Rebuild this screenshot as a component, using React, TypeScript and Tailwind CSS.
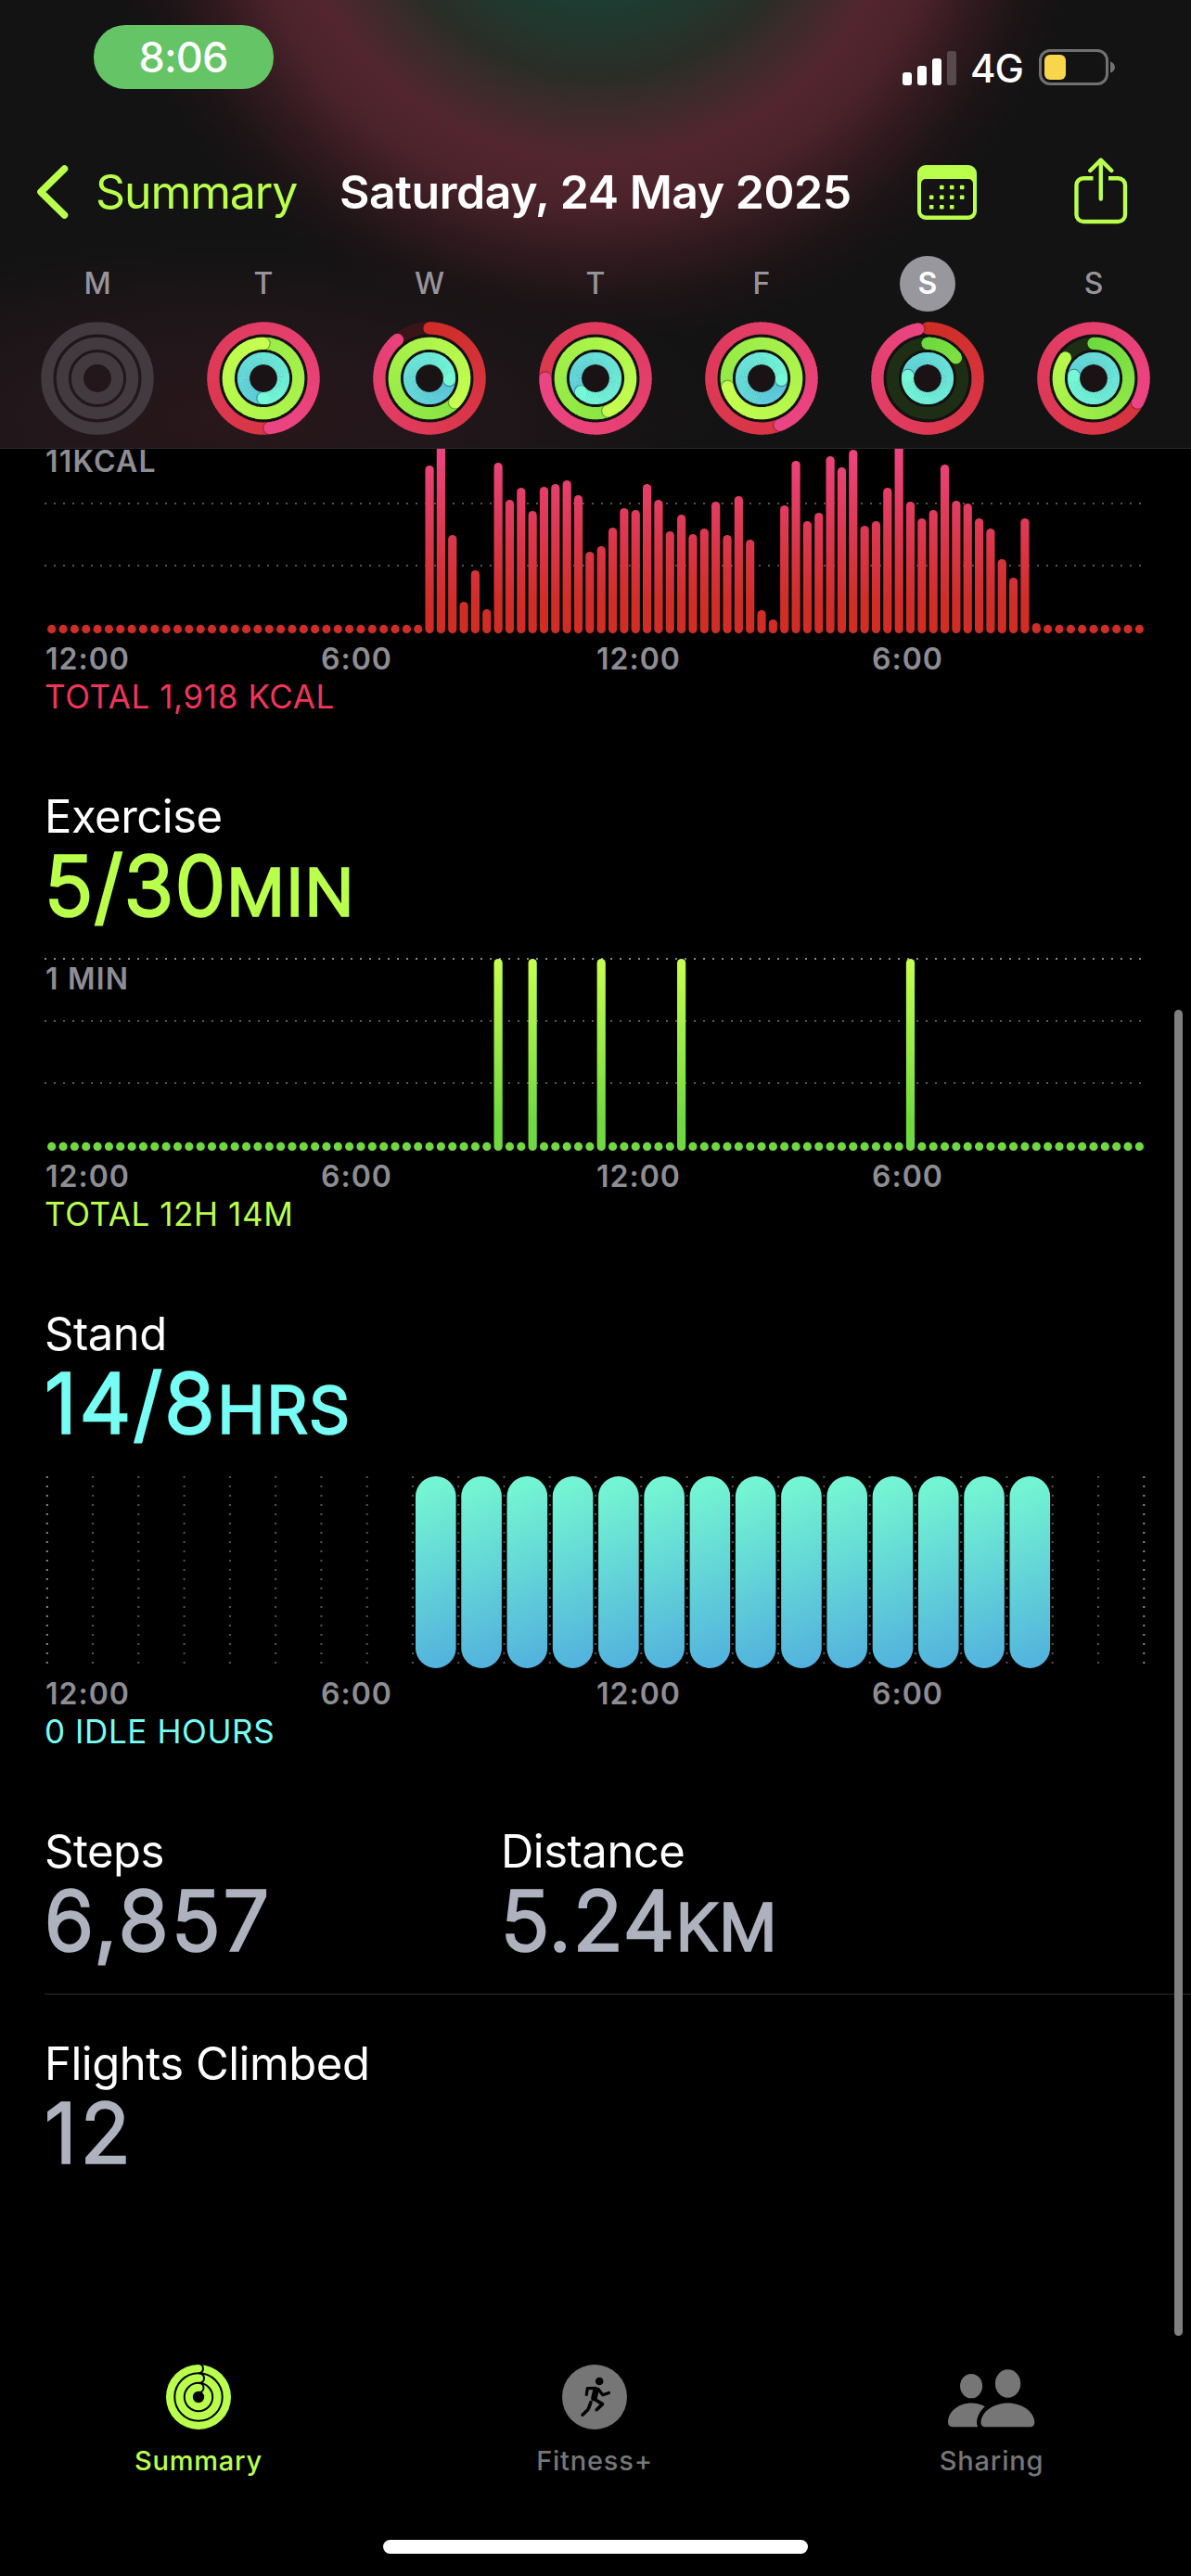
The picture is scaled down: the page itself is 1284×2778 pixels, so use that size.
import React from "react";

type RingProps = {
  radius: number;
  progress: number;
  from: number[];
  to: number[];
  track: string;
};

const days = [
  { label: "M", rings: null },
  { label: "T", rings: [1.48, 2, 1.5] },
  { label: "W", rings: [0.89, 1.37, 1.26] },
  { label: "T", rings: [1.75, 1.44, 1.63] },
  { label: "F", rings: [1.44, 1.71, 1.26] },
  { label: "S", rings: [0.97, 0.15, 1.77], selected: true },
  { label: "S", rings: [1.33, 0.85, 1.77] },
];

// bar heights in px, one bar per 15 minutes
const moveBars: Record<number, number> = {
  33: 181, 34: 204, 35: 106, 36: 34, 37: 68, 38: 26, 39: 184, 40: 144,
  41: 157, 42: 132, 43: 158, 44: 161, 45: 165, 46: 149, 47: 88, 48: 94,
  49: 114, 50: 135, 51: 133, 52: 161, 53: 144, 54: 110, 55: 128, 56: 107,
  57: 113, 58: 142, 59: 106, 60: 148, 61: 101, 62: 25, 63: 15, 64: 138,
  65: 186, 66: 121, 67: 130, 68: 191, 69: 179, 70: 198, 71: 116, 72: 121,
  73: 157, 74: 206, 75: 142, 76: 124, 77: 133, 78: 182, 79: 143, 80: 140,
  81: 124, 82: 113, 83: 80, 84: 60, 85: 124, 86: 11,
};

const exerciseBars: Record<number, number> = {
  39: 207, 42: 207, 48: 207, 55: 207, 75: 207,
};

const polar = (radius: number, turn: number) => {
  const a = turn * Math.PI * 2;
  return [61 + radius * Math.sin(a), 61 - radius * Math.cos(a)];
};

const mix = (from: number[], to: number[], t: number) =>
  `rgb(${from.map((c, i) => Math.round(c + (to[i] - c) * t)).join(",")})`;

const Ring = ({ radius, progress, from, to, track }: RingProps) => {
  const start = Math.max(0, progress - 1);
  const total = Math.max(1, progress);
  const steps = 72;
  const size = (progress - start) / steps;
  const [hx, hy] = polar(radius, progress);
  const [sx, sy] = polar(radius, progress + 0.9 / radius / 6.28);
  const [bx, by] = polar(radius, start);

  return (
    <g fill="none" strokeWidth="13.2">
      <circle cx="61" cy="61" r={radius} stroke={track} />
      {progress < 1 && (
        <circle cx={bx} cy={by} r="6.6" fill={mix(from, to, 0)} />
      )}
      {Array.from({ length: steps }, (_, i) => {
        const a = start + i * size;
        const [x1, y1] = polar(radius, a);
        const [x2, y2] = polar(radius, a + size + (i < steps - 1 ? 0.003 : 0));
        return (
          <path
            key={i}
            d={`M${x1} ${y1}A${radius} ${radius} 0 0 1 ${x2} ${y2}`}
            stroke={mix(from, to, a / total)}
          />
        );
      })}
      {progress > 0.95 && (
        <circle cx={sx} cy={sy} r="6.9" fill="#000" fillOpacity="0.3" />
      )}
      <circle cx={hx} cy={hy} r="6.6" fill={mix(from, to, progress / total)} />
    </g>
  );
};

const DayRings = ({ rings }: { rings: number[] | null }) => (
  <svg viewBox="0 0 122 122" className="w-[122px] h-[122px]">
    {rings ? (
      <>
        <circle cx="61" cy="61" r="60" fill="#131112" />
        <circle cx="61" cy="61" r="15" fill="#1a1315" />
        <Ring radius={54.1} progress={rings[0]} from={[207, 45, 38]} to={[236, 69, 133]} track="#3a1518" />
        <Ring radius={37.7} progress={rings[1]} from={[111, 218, 64]} to={[198, 255, 79]} track="#1e2e14" />
        <Ring radius={21.5} progress={rings[2]} from={[84, 183, 220]} to={[117, 248, 214]} track="#142a2e" />
      </>
    ) : (
      <g fill="none" stroke="#423a3e" strokeWidth="13.2">
        <circle cx="61" cy="61" r="54.1" />
        <circle cx="61" cy="61" r="37.7" />
        <circle cx="61" cy="61" r="21.5" />
      </g>
    )}
  </svg>
);

const StatusBar = () => (
  <div className="flex h-[123px] justify-between pl-[101px] pr-[82px]">
    <div className="mt-[27px] flex h-[69px] w-[194px] items-center justify-center rounded-[34px] bg-[#65c466] pr-px text-[45px] font-medium tracking-[-0.9px] text-white">
      8:06
    </div>
    <div className="mt-[53px] flex h-[39px] items-center">
      <svg viewBox="0 0 58 38" className="h-[38px] w-[58px]" fill="#fff">
        <rect x="0" y="24" width="10" height="14" rx="3" />
        <rect x="16" y="17" width="10" height="21" rx="3" />
        <rect x="32" y="9" width="10" height="29" rx="3" />
        <rect x="48" y="1" width="10" height="37" rx="3" fill="#564a4d" />
      </svg>
      <span className="ml-[15px] w-[60px] pt-[3px] text-[42px] leading-none font-medium tracking-[-1px] whitespace-nowrap text-white">
        4G
      </span>
      <svg viewBox="0 0 82 39" className="ml-[14px] h-[39px] w-[82px]">
        <rect x="1.5" y="1.5" width="72" height="36" rx="10.5" fill="none" stroke="#717171" strokeWidth="3" />
        <rect x="6" y="6" width="23" height="27" rx="6" fill="#f7d64b" />
        <path d="M77 13.5c3 .8 5 3 5 6s-2 5.2-5 6z" fill="#717171" />
      </svg>
    </div>
  </div>
);

const CalendarIcon = () => {
  const cols = [15.2, 26.3, 37.2, 48.2];
  const rows = [24, 34.7, 45.3];
  return (
    <svg viewBox="0 0 64 59" className="h-[59px] w-[64px]" fill="#b9ff4b">
      <path
        fillRule="evenodd"
        d="M9 0h46a9 9 0 0 1 9 9v41a9 9 0 0 1-9 9H9a9 9 0 0 1-9-9V9a9 9 0 0 1 9-9zM9 15a5 5 0 0 0-5 5v29.500a5 5 0 0 0 5 5h46a5 5 0 0 0 5-5V20a5 5 0 0 0-5-5z"
      />
      {rows.map((y, r) =>
        cols.map((x, c) =>
          (r === 0 && c === 0) || (r === 2 && c === 3) ? null : (
            <rect key={`${r}${c}`} x={x - 2.3} y={y - 2.3} width="4.6" height="4.6" rx="1" />
          )
        )
      )}
    </svg>
  );
};

const ShareIcon = () => (
  <svg
    viewBox="0 0 58 72"
    className="h-[72px] w-[58px]"
    fill="none"
    stroke="#b9ff4b"
    strokeWidth="4.4"
    strokeLinecap="round"
    strokeLinejoin="round"
  >
    <path
      d="M20.500 22.200H10a7.500 7.500 0 0 0-7.500 7.500V61.500a7.500 7.500 0 0 0 7.500 7.500h37.500a7.500 7.500 0 0 0 7.500-7.500V29.700a7.500 7.500 0 0 0-7.500-7.500H37"
      strokeLinecap="butt"
    />
    <path d="M28.800 3v41.500M17.300 14 28.800 2.500 40.300 14" />
  </svg>
);

const Header = () => (
  <header className="h-[484px] shrink-0 border-b border-[#2a2a2b] bg-[#131313] bg-[radial-gradient(circle_at_642px_-163px,#1d4034_150px,#1f3a30_180px,#2a2d27_245px,#3d2b2a_285px,#53262f_335px,#4b222b_385px,#301a1f_440px,#1c1416_490px,transparent_535px),radial-gradient(ellipse_520px_190px_at_250px_450px,#29171b_0%,#20161a_50%,transparent_100%)]">
    <StatusBar />
    <div className="flex h-[168px] items-center pl-10">
      <svg
        viewBox="0 0 34 58"
        className="h-[58px] w-[34px]"
        fill="none"
        stroke="#b9ff4b"
        strokeWidth="7.5"
        strokeLinecap="round"
        strokeLinejoin="round"
      >
        <path d="M29.500 4 4 29l25.500 25" />
      </svg>
      <span className="ml-[29px] w-[215px] text-[50px] tracking-[-1.1px] whitespace-nowrap text-[#b9ff4b]">
        Summary
      </span>
      <h1 className="ml-[48px] w-[550px] text-[50px] font-semibold tracking-[-0.45px] whitespace-nowrap text-white">
        Saturday, 24 May 2025
      </h1>
      <div className="ml-[73px]">
        <CalendarIcon />
      </div>
      <div className="-mt-[3px] ml-[105px]">
        <ShareIcon />
      </div>
    </div>
    <div className="-mt-[15px] flex justify-between px-[44px]">
      {days.map((day, i) => (
        <div key={i} className="flex w-[122px] flex-col items-center">
          <div
            className={
              day.selected
                ? "flex size-[60px] items-center justify-center rounded-full bg-[#98979d] text-[32px] font-semibold text-white"
                : "flex size-[60px] items-center justify-center text-[32px] font-medium text-[#98949b]"
            }
          >
            {day.label}
          </div>
          <div className="mt-[11px]">
            <DayRings rings={day.rings} />
          </div>
        </div>
      ))}
    </div>
  </header>
);

const GridLine = ({ y, color }: { y: number; color: string }) => (
  <line x1="0" x2="1183" y1={y} y2={y} stroke={color} strokeWidth="2" strokeDasharray="2 8" />
);

type BarChartProps = {
  id: string;
  bars: Record<number, number>;
  top: string;
  bottom: string;
  label: string;
};

const BarChart = ({ id, bars, top, bottom, label }: BarChartProps) => (
  <div className="relative h-[212px]">
    <svg viewBox="0 0 1190 212" className="h-[212px] w-[1190px]">
      <defs>
        <linearGradient id={id} gradientUnits="userSpaceOnUse" x1="0" y1="2" x2="0" y2="209">
          <stop offset="0" stopColor={top} />
          <stop offset="0.85" stopColor={bottom} />
        </linearGradient>
      </defs>
      <GridLine y={2} color="#8a8a8a" />
      <GridLine y={69} color="#545454" />
      <GridLine y={136} color="#545454" />
      {Array.from({ length: 96 }, (_, i) => {
        const h = bars[i] ?? 9.2;
        return (
          <rect key={i} x={3.1 + i * 12.344} y={209 - h} width="9.2" height={h} rx="4.6" fill={`url(#${id})`} />
        );
      })}
    </svg>
    <span className="absolute top-[4px] left-px text-[32px] leading-[40px] font-semibold tracking-[1.2px] text-[#8e8d93]">
      {label}
    </span>
  </div>
);

const StandChart = () => (
  <svg viewBox="0 0 1190 212" className="block h-[212px] w-[1190px]">
    <defs>
      <linearGradient id="stand" x1="0.45" y1="0" x2="0.55" y2="1">
        <stop offset="0.05" stopColor="#73f4d2" />
        <stop offset="1" stopColor="#52b2dd" />
      </linearGradient>
    </defs>
    {Array.from({ length: 25 }, (_, i) => (
      <line
        key={i}
        x1={2.8 + i * 49.27}
        x2={2.8 + i * 49.27}
        y1="2"
        y2="206"
        stroke={i % 24 === 0 ? "#8a8a8a" : "#545454"}
        strokeWidth="2"
        strokeDasharray="2 8"
      />
    ))}
    {Array.from({ length: 14 }, (_, i) => (
      <rect key={i} x={400 + i * 49.27} y="2" width="43.6" height="207" rx="21.8" fill="url(#stand)" />
    ))}
  </svg>
);

const Axis = () => (
  <div className="mt-[5px] -mb-px flex pl-px text-[32px] leading-[40px] font-semibold tracking-[1px] text-[#8e8d93]">
    {["12:00", "6:00", "12:00", "6:00"].map((t, i) => (
      <span key={i} className="w-[297px]">
        {t}
      </span>
    ))}
  </div>
);

const Total = ({ text, color }: { text: string; color: string }) => (
  <p className={`mt-px text-[35px] leading-[40px] tracking-[0.6px] ${color}`}>{text}</p>
);

type MetricProps = {
  title: string;
  value: string;
  unit?: string;
  color: string;
  spacing?: string;
};

const Metric = ({ title, value, unit, color, spacing = "tracking-[1.5px]" }: MetricProps) => (
  <div>
    <h2 className="text-[49px] leading-[60px] tracking-[-0.5px] text-white">{title}</h2>
    <p
      className={`mt-[3px] h-[80px] pt-px text-[88px] leading-[80px] font-light whitespace-nowrap [-webkit-text-stroke:3.5px_currentColor] [stroke-linejoin:round] ${spacing} ${color}`}
    >
      {value}
      {unit && <span className="text-[69px] leading-none tracking-[2px]">{unit}</span>}
    </p>
  </div>
);

const TabBar = () => (
  <nav className="flex h-[258px] shrink-0 flex-col items-center justify-between pb-[24px]">
    <div className="flex w-full text-center text-[29px] leading-[36px] font-medium tracking-[0.8px] text-[#767676]">
      <div className="flex w-[428px] flex-col items-center pt-[30px] text-[#b9ff4b]">
        <svg viewBox="0 0 70 70" className="size-[70px]" fill="none" stroke="#000" strokeWidth="2">
          <circle cx="35" cy="35" r="35" fill="#b9ff4b" stroke="none" />
          <circle cx="35" cy="35" r="25.7" />
          <circle cx="35" cy="35" r="15.2" />
          <circle cx="35" cy="35" r="6.2" fill="#000" stroke="none" />
          <path d="M35.500-1a5 5.300 0 0 1 1 10.300M35.500 9.500a5 5.200 0 0 1 1 10.400M35.500 20a5 5 0 0 1 0 10" />
        </svg>
        <span className="mt-4">Summary</span>
      </div>
      <div className="flex w-[428px] flex-col items-center pt-[30px]">
        <svg
          viewBox="0 0 70 70"
          className="-ml-[3px] size-[70px]"
          fill="none"
          stroke="#000"
          strokeLinecap="round"
          strokeLinejoin="round"
        >
          <circle cx="35" cy="35" r="35" fill="#767676" stroke="none" />
          <circle cx="40.2" cy="18" r="4.3" fill="#000" stroke="none" />
          <path d="M26.300 32.500 27.300 25.700 36 25.300" strokeWidth="3.2" />
          <path d="M36.500 27.500 34.500 36" strokeWidth="6.6" />
          <path d="M39 26.500 43.800 32.800 50.500 30.500" strokeWidth="3.2" />
          <path d="M34.500 37 43.500 42.600 37.200 48.700" strokeWidth="3.6" />
          <path d="M31 40.500C29.500 44 29.500 46.500 27.500 49L22 54.200" strokeWidth="3.6" />
        </svg>
        <span className="mt-4 -ml-[2px]">Fitness+</span>
      </div>
      <div className="flex w-[428px] flex-col items-center pt-[33px]">
        <svg viewBox="60 65 290 200" className="-ml-[4px] h-[67px] w-[97px]" fill="#767676">
          <ellipse cx="141" cy="125" rx="36" ry="39.5" />
          <path d="M66 240C68 205 102 180 141 180c16 0 31 4 44 11-16 15-26 34-26 52 0 5 1 10 3 14H82c-11 0-16-6-16-17z" />
          <ellipse cx="259" cy="117" rx="41" ry="45.5" />
          <path d="M172 241c2-33 41-61 87-61s84 28 86 61c0 10-5 16-16 16H188c-11 0-16-6-16-16z" />
        </svg>
        <span className="mt-4 -ml-[2px]">Sharing</span>
      </div>
    </div>
    <div className="h-[15px] w-[458px] rounded-full bg-white" />
  </nav>
);

const App = () => {
  return (
    <div className="relative flex h-[2778px] w-[1284px] flex-col overflow-hidden bg-black font-['Inter',sans-serif]">
      <Header />
      <main className="flex-1 overflow-hidden pl-12">
        <section className="-mt-[10px]">
          <BarChart id="move" bars={moveBars} top="#ee4685" bottom="#cf2d26" label="11KCAL" />
          <Axis />
          <Total text="TOTAL 1,918 KCAL" color="text-[#f0355a]" />
        </section>

        <section className="mt-[80px]">
          <Metric title="Exercise" value="5/30" unit="MIN" color="text-[#b9ff4b]" />
          <div className="mt-[38px]">
            <BarChart id="exercise" bars={exerciseBars} top="#c8ff50" bottom="#70d940" label="1 MIN" />
          </div>
          <Axis />
          <Total text="TOTAL 12H 14M" color="text-[#b9ff4b]" />
        </section>

        <section className="mt-[80px]">
          <Metric title="Stand" value="14/8" unit="HRS" color="text-[#76fef5]" spacing="tracking-[3px]" />
          <div className="mt-[38px]">
            <StandChart />
          </div>
          <Axis />
          <Total text="0 IDLE HOURS" color="text-[#76fef5]" />
        </section>

        <section className="mt-[80px]">
          <div className="flex border-b border-[#2d2d2f] pb-[40px]">
            <div className="w-[492px]">
              <Metric title="Steps" value="6,857" color="text-[#aeb2be]" spacing="tracking-[3.5px]" />
            </div>
            <Metric title="Distance" value="5.24" unit="KM" color="text-[#aeb2be]" />
          </div>
          <div className="mt-[45px]">
            <Metric title="Flights Climbed" value="12" color="text-[#aeb2be]" spacing="tracking-[4px]" />
          </div>
        </section>
      </main>
      <TabBar />
      {/* scroll indicator */}
      <div className="absolute top-[1089px] right-[9px] h-[1430px] w-[9px] rounded-full bg-[#808080]" />
    </div>
  );
};

export default App;
